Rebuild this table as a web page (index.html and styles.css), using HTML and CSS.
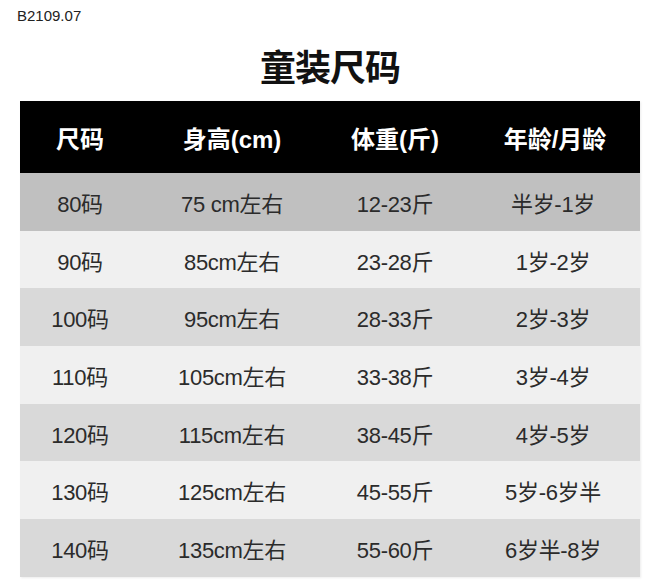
FILE: index.html
```html
<!DOCTYPE html>
<html lang="zh">
<head>
<meta charset="utf-8">
<link rel="stylesheet" href="styles.css">
</head>
<body>
<div class="page">
  <div class="code">B2109.07</div>
  <h1 class="title">童装尺码</h1>
  <div class="table">
    <div class="row head">
      <div class="c1">尺码</div><div class="c2">身高(cm)</div><div class="c3">体重(斤)</div><div class="c4">年龄/月龄</div>
    </div>
    <div class="row first">
      <div class="c1">80码</div><div class="c2">75 cm左右</div><div class="c3">12-23斤</div><div class="c4">半岁-1岁</div>
    </div>
    <div class="row light">
      <div class="c1">90码</div><div class="c2">85cm左右</div><div class="c3">23-28斤</div><div class="c4">1岁-2岁</div>
    </div>
    <div class="row dark">
      <div class="c1">100码</div><div class="c2">95cm左右</div><div class="c3">28-33斤</div><div class="c4">2岁-3岁</div>
    </div>
    <div class="row light">
      <div class="c1">110码</div><div class="c2">105cm左右</div><div class="c3">33-38斤</div><div class="c4">3岁-4岁</div>
    </div>
    <div class="row dark">
      <div class="c1">120码</div><div class="c2">115cm左右</div><div class="c3">38-45斤</div><div class="c4">4岁-5岁</div>
    </div>
    <div class="row light">
      <div class="c1">130码</div><div class="c2">125cm左右</div><div class="c3">45-55斤</div><div class="c4">5岁-6岁半</div>
    </div>
    <div class="row dark">
      <div class="c1">140码</div><div class="c2">135cm左右</div><div class="c3">55-60斤</div><div class="c4">6岁半-8岁</div>
    </div>
  </div>
</div>
</body>
</html>
```
FILE: styles.css
```css
html, body {
  margin: 0;
  padding: 0;
  background: #ffffff;
}
body {
  font-family: "Liberation Sans", "Noto Sans CJK SC", sans-serif;
  color: #2b2b2b;
}
.page {
  width: 664px;
  height: 587px;
  padding: 6px 0 0 0;
  box-sizing: border-box;
}
.code {
  font-size: 15px;
  line-height: 20px;
  color: #222;
  padding-left: 17px;
}
.title {
  margin: 20px 0 0 0;
  text-align: center;
  font-family: "Noto Sans CJK SC", sans-serif;
  font-weight: 700;
  font-size: 36px;
  line-height: 38px;
  color: #111;
  letter-spacing: -1px;
  padding-right: 4px;
}
.table {
  margin: 17px 0 0 20px;
  width: 620px;
  box-shadow: 1px 1px 2px rgba(0,0,0,0.08);
}
.row {
  display: grid;
  grid-template-columns: 120px 184px 142px 174px;
  align-items: center;
  height: 57.7px;
  font-size: 22px;
  text-align: center;
  letter-spacing: -0.3px;
}
.row.head {
  height: 72px;
  background: #000;
  color: #fff;
  font-weight: 700;
  font-size: 24px;
  letter-spacing: 0;
}
.row.first { background: #c0c0c0; }
.row.light { background: #f0f0f0; }
.row.dark { background: #d9d9d9; }
.head .c4 { padding-left: 4px; }
```
